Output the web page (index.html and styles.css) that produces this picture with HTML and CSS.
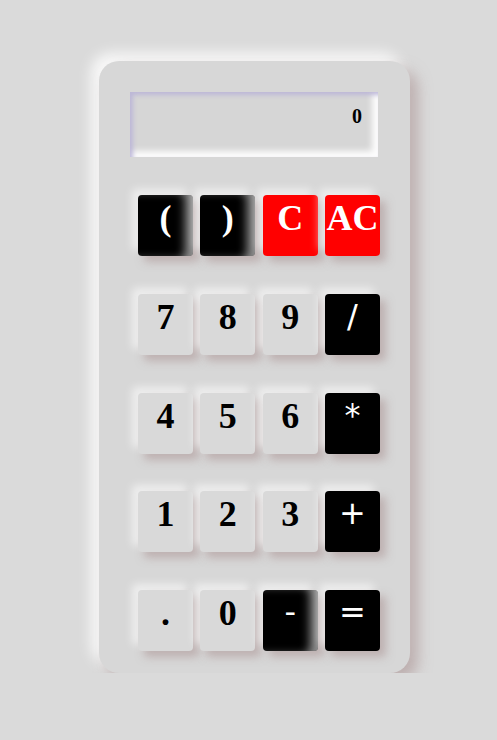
FILE: index.html
```html
<!DOCTYPE html>
<html>
<head>
<meta charset="utf-8">
<link rel="stylesheet" href="styles.css">
</head>
<body>
<div class="calc">
  <div class="display">0</div>
  <div class="keys">
    <div class="key dark pressed">(</div>
    <div class="key dark pressed">)</div>
    <div class="key red">C</div>
    <div class="key red">AC</div>
    <div class="key">7</div>
    <div class="key">8</div>
    <div class="key">9</div>
    <div class="key dark op">/</div>
    <div class="key">4</div>
    <div class="key">5</div>
    <div class="key">6</div>
    <div class="key dark op">*</div>
    <div class="key">1</div>
    <div class="key">2</div>
    <div class="key">3</div>
    <div class="key dark op">+</div>
    <div class="key">.</div>
    <div class="key">0</div>
    <div class="key dark op pressed">-</div>
    <div class="key dark op">=</div>
  </div>
</div>
</body>
</html>
```

FILE: styles.css
```css
html, body {
  margin: 0;
  padding: 0;
  background: #dadada;
}
body {
  padding: 61px 0 0 99px;
  font-family: "Liberation Serif", "Times New Roman", serif;
}
.calc {
  box-sizing: border-box;
  width: 311px;
  height: 612px;
  padding: 31px 32px 22px 31px;
  background: #d7d7d7;
  border-radius: 20px;
  box-shadow: 8px 8px 14px rgba(165, 140, 140, 0.55), -8px -8px 14px rgba(255, 255, 255, 0.85);
}
.display {
  box-sizing: border-box;
  height: 65px;
  padding: 12px 16px 0 0;
  text-align: right;
  font-weight: bold;
  font-size: 20px;
  line-height: 24px;
  color: #000;
  background: #d6d6d6;
  box-shadow: inset 3px 3px 4px rgba(185, 180, 215, 0.9), inset -6px -6px 6px rgba(255, 255, 255, 0.95);
}
.keys {
  margin-top: 38px;
  padding-left: 8px;
  display: grid;
  grid-template-columns: repeat(4, 55px);
  grid-auto-rows: 61px;
  column-gap: 7.33px;
  row-gap: 37.75px;
}
.key {
  box-sizing: border-box;
  padding-top: 5px;
  text-align: center;
  font-weight: bold;
  font-size: 36px;
  line-height: 36px;
  color: #000;
  background: #d9d9d9;
  border-radius: 4px;
  box-shadow: 6px 6px 9px rgba(165, 140, 140, 0.5), -6px -6px 9px rgba(255, 255, 255, 0.6);
}
.dark {
  background: #000;
  color: #fff;
}
.red {
  background: #ff0000;
  color: #fff;
}
.op {
  font-family: "DejaVu Sans", sans-serif;
  font-weight: normal;
  font-size: 32px;
  padding-top: 4px;
}
.pressed {
  box-shadow: inset -12px 0 10px -4px rgba(255, 255, 255, 0.55), 6px 6px 9px rgba(165, 140, 140, 0.5), -6px -6px 9px rgba(255, 255, 255, 0.6);
}
```
